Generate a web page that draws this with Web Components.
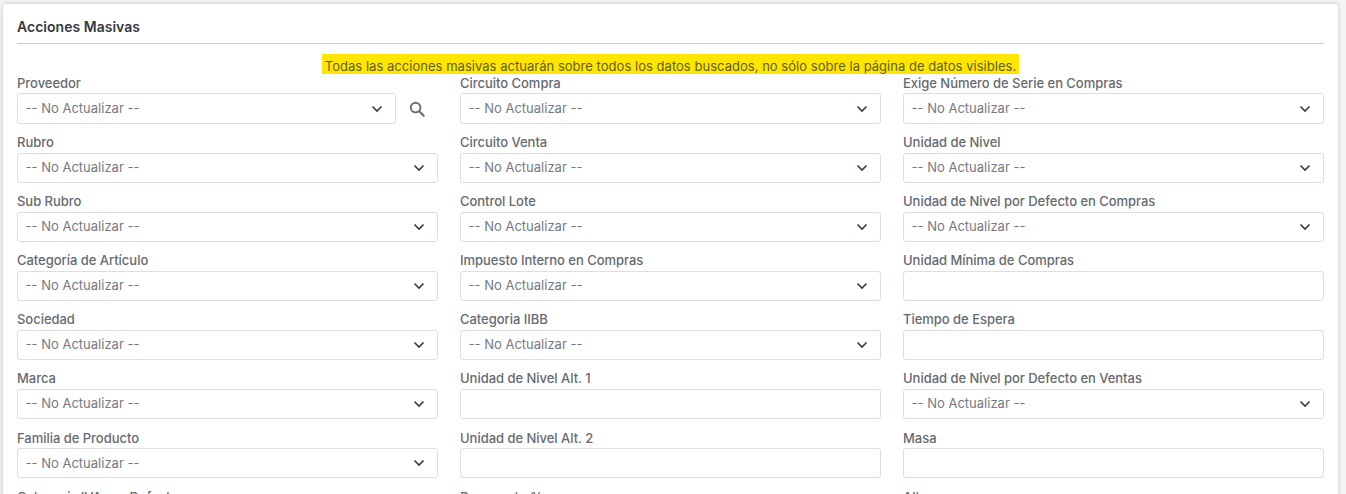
<!DOCTYPE html>
<html lang="es"><head><meta charset="utf-8"><title>Acciones Masivas</title>
<style>
html,body{margin:0;height:494px;overflow:hidden;background:#f4f4f4;font-family:"Inter","Noto Sans",sans-serif}
</style></head><body>
<mass-card>
  <form-field label="Proveedor" kind="select" search></form-field>
  <form-field label="Circuito Compra" kind="select"></form-field>
  <form-field label="Exige Número de Serie en Compras" kind="select"></form-field>
  <form-field label="Rubro" kind="select"></form-field>
  <form-field label="Circuito Venta" kind="select"></form-field>
  <form-field label="Unidad de Nivel" kind="select"></form-field>
  <form-field label="Sub Rubro" kind="select"></form-field>
  <form-field label="Control Lote" kind="select"></form-field>
  <form-field label="Unidad de Nivel por Defecto en Compras" kind="select"></form-field>
  <form-field label="Categoría de Artículo" kind="select"></form-field>
  <form-field label="Impuesto Interno en Compras" kind="select"></form-field>
  <form-field label="Unidad Mínima de Compras"></form-field>
  <form-field label="Sociedad" kind="select"></form-field>
  <form-field label="Categoria IIBB" kind="select"></form-field>
  <form-field label="Tiempo de Espera"></form-field>
  <form-field label="Marca" kind="select"></form-field>
  <form-field label="Unidad de Nivel Alt. 1"></form-field>
  <form-field label="Unidad de Nivel por Defecto en Ventas" kind="select"></form-field>
  <form-field label="Familia de Producto" kind="select"></form-field>
  <form-field label="Unidad de Nivel Alt. 2"></form-field>
  <form-field label="Masa"></form-field>
  <form-field label="Categoría IVA por Defecto"></form-field>
  <form-field label="Descuento %"></form-field>
  <form-field label="Alto"></form-field>
</mass-card>
<script>
customElements.define('mass-card', class extends HTMLElement{
  constructor(){super();this.attachShadow({mode:'open'}).innerHTML=`<style>
  :host{display:block;box-sizing:border-box;margin:4px 8px 0 3px;height:600px;padding:13px 14px;background:#fff;box-shadow:0 0 4px rgba(0,0,0,.22);border-radius:2px}
  h2{margin:0;font:600 14px/20px Inter,sans-serif;letter-spacing:.02px;color:#343a40;padding-bottom:6px;border-bottom:1px solid #c9c9cf}
  .note{display:flex;justify-content:center;height:20.3px;margin-top:10px}
  mark{background:#ffe600;color:#5f5f10;font:400 13px/19px Inter,sans-serif;letter-spacing:.03px;padding:3px 3px 0 3px;height:16.5px;white-space:nowrap}
  .grid{display:grid;grid-template-columns:repeat(3,421px);column-gap:22px;grid-auto-rows:59.13px}
  </style><h2>Acciones Masivas</h2><div class="note"><mark>Todas las acciones masivas actuarán sobre todos los datos buscados, no sólo sobre la página de datos visibles.</mark></div><div class="grid"><slot></slot></div>`;
  }
});
customElements.define('form-field', class extends HTMLElement{
  constructor(){super();
    const sel=this.getAttribute('kind')==='select', s=this.hasAttribute('search');
    const lab=this.getAttribute('label');
    this.attachShadow({mode:'open'}).innerHTML=`<style>
    :host{display:block;min-width:0}
    label{display:block;font:500 13px/16px Inter,sans-serif;letter-spacing:-.03px;color:#656a70;margin:.5px 0 2.6px;white-space:nowrap}
    .row{display:flex;align-items:center}
    .box{flex:1;box-sizing:border-box;height:30.3px;display:flex;align-items:center;justify-content:space-between;border:1px solid #dcdde6;border-radius:3px;background:#fff;padding:0 12px 0 8px;font:400 13px/16px Inter,sans-serif;color:#757a80}
    .box span{margin:0 0 1.5px -.4px}
    .box svg{display:block}
    .search{flex:0 0 42px;display:flex;justify-content:center;padding-left:0}
    </style><label>${lab}</label><div class="row"><div class="box">${sel?`<span>-- No Actualizar --</span><svg width="12" height="8" viewBox="0 0 12 8"><path d="M1.5 1.5 6 6l4.5-4.5" fill="none" stroke="#343a40" stroke-width="1.6"/></svg>`:''}</div>${s?`<div class="search"><svg width="16" height="16" viewBox="0 0 16 16"><circle cx="6.6" cy="6.6" r="4.8" fill="none" stroke="#6a6f75" stroke-width="1.9"/><path d="M10.2 10.2 14.6 14.6" stroke="#6a6f75" stroke-width="2.2" stroke-linecap="round"/></svg></div>`:''}</div>`;
  }
});
</script>
</body></html>
